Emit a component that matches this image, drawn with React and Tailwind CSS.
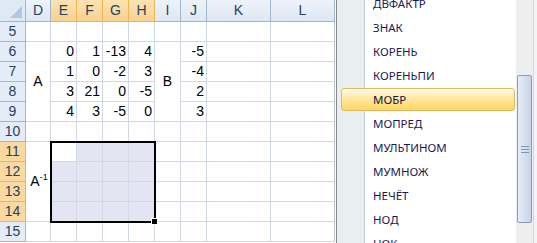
import React from 'react'

const COLS = ['D', 'E', 'F', 'G', 'H', 'I', 'J', 'K', 'L']
const SEL_COLS = ['E', 'F', 'G', 'H']

const matrixA = {
  6: [0, 1, -13, 4],
  7: [1, 0, -2, 3],
  8: [3, 21, 0, -5],
  9: [4, 3, -5, 0],
}
const vectorB = { 6: -5, 7: -4, 8: 2, 9: 3 }

const FUNCS = ['ДВФАКТР', 'ЗНАК', 'КОРЕНЬ', 'КОРЕНЬПИ', 'МОБР', 'МОПРЕД', 'МУЛЬТИНОМ', 'МУМНОЖ', 'НЕЧЁТ', 'НОД', 'НОК']

const cell = 'border-r border-b border-[#d0d7e5] flex items-center justify-end pr-[2px] text-[14px] text-black'
const numFont = { fontFamily: '"Liberation Sans", Arial, sans-serif' }

function RowCells({ r }) {
  const out = []
  const rowSel = r >= 11 && r <= 14
  out.push(
    <div
      key="h"
      className={`border-r border-b flex items-center justify-center text-[14px] text-[#27415f] ${
        rowSel ? 'bg-[#f9d99f] border-[#f1b44e]' : 'bg-[#e4ecf7] border-[#9eb6ce]'
      }`}
    >
      {r}
    </div>
  )

  // D
  if (r === 6) {
    out.push(
      <div key="D" className="row-span-4 border-r border-b border-[#d0d7e5] flex items-center justify-center text-[14px]">
        A
      </div>
    )
  } else if (r === 11) {
    out.push(
      <div key="D" className="row-span-4 border-r border-b border-[#d0d7e5] flex items-center justify-center text-[14px] pl-[2px]">
        <span>
          A<sup className="text-[9px] relative -top-[6px]">-1</sup>
        </span>
      </div>
    )
  } else if (!((r >= 7 && r <= 9) || (r >= 12 && r <= 14))) {
    out.push(<div key="D" className={cell} />)
  }

  // E..H
  SEL_COLS.forEach((c, i) => {
    const filled = rowSel && !(r === 11 && c === 'E')
    out.push(
      <div key={c} className={`${cell} ${filled ? 'bg-[#e3e6f2]' : ''}`}>
        {matrixA[r] ? matrixA[r][i] : ''}
      </div>
    )
  })

  // I
  if (r === 6) {
    out.push(
      <div key="I" className="row-span-4 border-r border-b border-[#d0d7e5] flex items-center justify-center text-[14px]">
        B
      </div>
    )
  } else if (!(r >= 7 && r <= 9)) {
    out.push(<div key="I" className={cell} />)
  }

  out.push(
    <div key="J" className={cell}>
      {vectorB[r] !== undefined ? vectorB[r] : ''}
    </div>
  )
  out.push(<div key="K" className={cell} />)
  out.push(<div key="L" className={`${cell} border-r-[#b9c3d3]`} />)
  return out
}

function Sheet() {
  const rows = []
  for (let r = 5; r <= 15; r++) rows.push(<RowCells key={r} r={r} />)
  return (
    <div className="relative w-[336px] h-[243px] overflow-hidden bg-white" style={numFont}>
      <div className="grid grid-cols-[26px_25px_26px_26px_26px_26px_26px_26px_64px_64px] grid-rows-[22px_repeat(11,20px)]">
        {/* corner */}
        <div className="relative border-r border-b border-[#9eb6ce] bg-[#dfe8f5]">
          <div className="absolute right-[3px] bottom-[3px] w-0 h-0 border-l-[12px] border-l-transparent border-b-[12px] border-b-[#b3c7e1]" />
        </div>
        {COLS.map((c) => {
          const sel = SEL_COLS.includes(c)
          return (
            <div
              key={c}
              className={`border-r border-b flex items-center justify-center text-[14px] text-[#27415f] ${
                sel
                  ? 'bg-linear-to-b from-[#fbe3b4] to-[#f8d28e] border-[#f1b44e]'
                  : 'bg-linear-to-b from-[#eef3fa] to-[#dfe7f3] border-[#9eb6ce]'
              }`}
            >
              {c}
            </div>
          )
        })}
        {rows}
      </div>

      {/* selection frame */}
      <div className="absolute left-[50px] top-[141px] w-[106px] h-[82px] border-2 border-black">
        <div className="absolute -right-[4px] -bottom-[4px] w-[7px] h-[7px] bg-white p-px">
          <div className="w-full h-full bg-black" />
        </div>
      </div>
    </div>
  )
}

function Dropdown() {
  return (
    <div
      className="flex-1 h-[243px] flex border-l border-[#8a8a8a] bg-white overflow-hidden"
      style={{ fontFamily: '"Noto Sans", "Open Sans", sans-serif' }}
    >
      <div className="w-[179px] h-full bg-[linear-gradient(to_right,#e9eeee_27px,#c9cccc_27px,#c9cccc_28px,#ffffff_28px)]">
        <div className="-mt-[8px] flex flex-col">
          {FUNCS.map((f) =>
            f === 'МОБР' ? (
              <div key={f} className="h-[24px]">
                <div className="ml-[4px] mr-[1px] h-[23px] rounded-[3px] border border-[#ddbb65] bg-linear-to-b from-[#fffae6] via-[#ffe69a] to-[#ffd65e] flex items-center pl-[31px] text-[11.5px] text-[#15143f]">
                  {f}
                </div>
              </div>
            ) : (
              <div key={f} className="h-[24px] flex items-center pl-[36px] text-[11.5px] text-[#1b1a56]">
                {f}
              </div>
            )
          )}
        </div>
      </div>
      {/* scrollbar */}
      <div className="w-[17px] h-full bg-[#eceeef] flex flex-col pt-[75px]">
        <div className="mx-px h-[148px] rounded-[2px] border border-[#8c9db6] bg-linear-to-r from-[#e6edf7] via-[#d6e0ef] to-[#c5d2e6] flex flex-col items-center justify-center gap-[2px]">
          <div className="w-[8px] h-px bg-[#8595ad]" />
          <div className="w-[8px] h-px bg-[#8595ad]" />
          <div className="w-[8px] h-px bg-[#8595ad]" />
        </div>
      </div>
      <div className="flex-1 h-full bg-[#f3f3f3] border-l border-[#d6d6d6]" />
    </div>
  )
}

export default function App() {
  return (
    <div className="w-[537px] h-[243px] flex overflow-hidden bg-white">
      <Sheet />
      <Dropdown />
    </div>
  )
}
